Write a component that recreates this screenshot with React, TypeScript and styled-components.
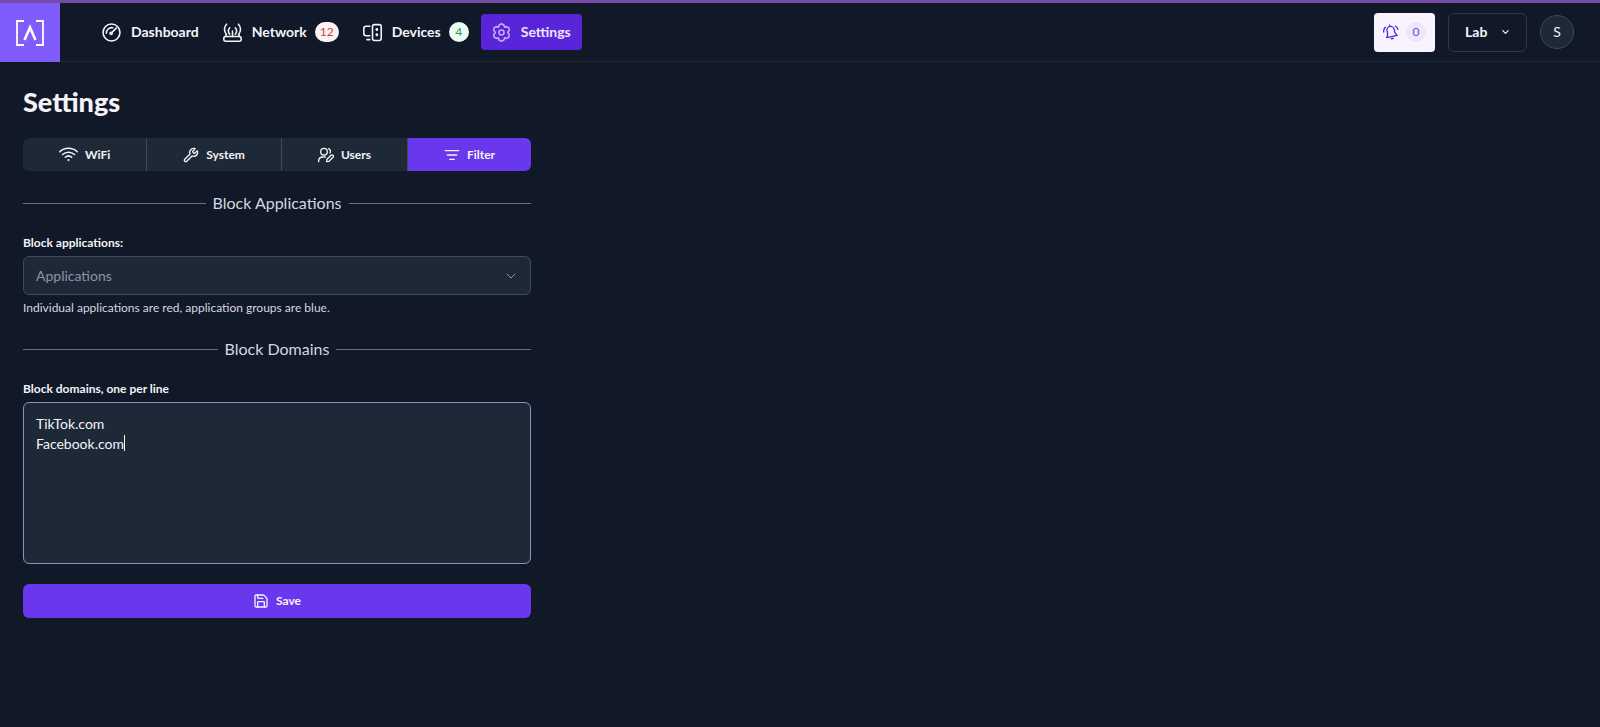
import React, { useState } from 'react';
import styled, { createGlobalStyle, css } from 'styled-components';
import { ChevronDown, Save, Wrench } from 'lucide-react';

const color = {
  page: '#111827',
  surface: '#1e2938',
  line: '#2d3748',
  border: '#3e4b5c',
  rule: '#65718a',
  focus: '#8496bd',
  text: '#f3f4f8',
  soft: '#d3d7e0',
  muted: '#8b95a5',
  accent: '#6a38ec',
  accentDeep: '#5a25d8',
  brand: '#7f5cfb',
};

const GlobalStyle = createGlobalStyle`
  *, *::before, *::after { box-sizing: border-box; }
  body {
    margin: 0;
    background: ${color.page};
    color: ${color.text};
    font-family: Lato, 'Liberation Sans', sans-serif;
    font-size: 14px;
    line-height: 20px;
  }
  button, select, textarea { font: inherit; color: inherit; }
`;

const Header = styled.header`
  display: flex;
  align-items: center;
  height: 62px;
  border-top: 3px solid #754ba6;
  border-bottom: 1px solid #1e2938;
`;

const Brand = styled.a`
  display: flex;
  align-items: center;
  justify-content: center;
  align-self: stretch;
  width: 60px;
  margin-bottom: -1px;
  background: ${color.brand};
  color: #fff;
`;

const Nav = styled.nav`
  display: flex;
  align-items: center;
  margin-left: 30px;
`;

const NavLink = styled.a<{ $active?: boolean }>`
  display: flex;
  align-items: center;
  gap: 10px;
  height: 36px;
  padding: 0 12px;
  border-radius: 4px;
  color: ${color.text};
  font-weight: 700;
  text-decoration: none;
  svg { flex: none; }
  ${(p) => p.$active && css`
    padding: 0 11px;
    background: ${color.accentDeep};
    color: #ede7ff;
    svg { color: #c3adfa; }
  `}
`;

const Count = styled.span<{ $tone: 'red' | 'green' | 'violet' }>`
  display: inline-flex;
  align-items: center;
  justify-content: center;
  min-width: 20px;
  height: 20px;
  margin-left: -2px;
  padding: 0 5px;
  border-radius: 10px;
  font-size: 12px;
  font-weight: 400;
  ${(p) => p.$tone === 'red' && css`background: #fef2f2; color: #c4473f;`}
  ${(p) => p.$tone === 'green' && css`background: #ecfdf5; color: #2c9560;`}
  ${(p) => p.$tone === 'violet' && css`background: #ede6fd; color: #7450b8;`}
`;

const HeaderTools = styled.div`
  display: flex;
  align-items: center;
  gap: 13px;
  margin-left: auto;
  padding-right: 26px;
`;

const AlertButton = styled.button`
  display: flex;
  align-items: center;
  gap: 9px;
  height: 39px;
  padding: 0 9px;
  border: 0;
  border-radius: 4px;
  background: #f8f4ff;
  color: #5a25d8;
`;

const SelectBox = styled.div<{ $inset: number }>`
  position: relative;
  svg {
    position: absolute;
    top: 50%;
    right: ${(p) => p.$inset}px;
    transform: translateY(-50%);
    pointer-events: none;
  }
`;

const SiteSelect = styled.select`
  appearance: none;
  display: block;
  height: 39px;
  padding: 0 38px 0 16px;
  border: 1px solid ${color.line};
  border-radius: 6px;
  background: transparent;
  font-weight: 700;
`;

const Avatar = styled.button`
  width: 34px;
  height: 34px;
  padding: 0;
  border: 1px solid ${color.border};
  border-radius: 50%;
  background: ${color.surface};
`;

const Main = styled.main`
  max-width: 554px;
  padding: 24px 23px;
`;

const Title = styled.h1`
  margin: 0 0 20px;
  font-size: 27px;
  line-height: 32px;
  font-weight: 900;
`;

const Tabs = styled.div`
  display: flex;
  height: 33px;
  border-radius: 6px;
  overflow: hidden;
`;

const Tab = styled.button<{ $active?: boolean }>`
  display: flex;
  flex: 1 1 auto;
  align-items: center;
  justify-content: center;
  gap: 7px;
  padding: 0;
  border: 0;
  border-right: 1px solid ${color.border};
  background: ${(p) => (p.$active ? color.accent : color.surface)};
  font-size: 12px;
  font-weight: 700;
  &:last-child { border-right: 0; }
`;

const Form = styled.form`
  display: flex;
  flex-direction: column;
`;

const SectionTitle = styled.h2`
  display: flex;
  align-items: center;
  gap: 7px;
  margin: 20px 0 18px;
  color: ${color.soft};
  font-size: 16px;
  line-height: 24px;
  font-weight: 400;
  &::before, &::after {
    content: '';
    flex: 1;
    height: 1px;
    background: ${color.rule};
  }
`;

const Label = styled.label`
  margin-bottom: 3px;
  font-size: 12px;
  font-weight: 700;
`;

const AppSelect = styled.select`
  appearance: none;
  display: block;
  width: 100%;
  height: 39px;
  padding: 0 12px;
  border: 1px solid ${color.border};
  border-radius: 6px;
  background: ${color.surface};
  color: ${color.muted};
`;

const Hint = styled.p`
  margin: 4px 0 0;
  color: ${color.soft};
  font-size: 12px;
  line-height: 18px;
`;

const AreaBox = styled.div`
  position: relative;
`;

const Area = styled.textarea`
  display: block;
  width: 100%;
  height: 162px;
  padding: 11px 12px;
  border: 1px solid ${color.focus};
  border-radius: 6px;
  outline: 0;
  resize: none;
  background: ${color.surface};
  caret-color: transparent;
`;

const Caret = styled.span`
  position: absolute;
  top: 33px;
  left: 101px;
  width: 1px;
  height: 16px;
  background: ${color.text};
`;

const SaveButton = styled.button`
  display: flex;
  align-items: center;
  justify-content: center;
  gap: 7px;
  height: 34px;
  margin-top: 20px;
  border: 0;
  border-radius: 6px;
  background: ${color.accent};
  font-size: 12px;
  font-weight: 700;
`;

const Icon = ({ size = 19, stroke = 2, children }: { size?: number; stroke?: number; children: React.ReactNode }) => (
  <svg width={size} height={size} viewBox="0 0 24 24" fill="none" stroke="currentColor"
    strokeWidth={stroke} strokeLinecap="round" strokeLinejoin="round" aria-hidden="true">
    {children}
  </svg>
);

const LogoMark = () => (
  <svg width="30" height="28" viewBox="0 0 30 28" fill="none" stroke="currentColor" aria-hidden="true">
    <path d="M9 2H2v24h7M21 2h7v24h-7" strokeWidth="1.800" />
    <path d="M9.500 21 15 8.500l5.500 12.500" strokeWidth="2.600" />
  </svg>
);

const GaugeIcon = () => (
  <Icon>
    <circle cx="12" cy="12" r="10.700" />
    <path d="M5.500 13a6.800 6.800 0 0 1 8-7" />
    <circle cx="11.500" cy="13" r="1.400" />
    <path d="m12.500 12 5.500-5.500" />
  </Icon>
);

const RouterIcon = () => (
  <Icon>
    <rect x="1" y="17" width="22" height="6" rx="2.500" />
    <path d="M12 17v-7M3.500 17v-2M20.500 17v-2M8.500 14a5.500 5.500 0 0 1 0-8M15.500 14a5.500 5.500 0 0 0 0-8M4.500 14.500C1 11 1 5 4.500 1.500M19.500 14.500C23 11 23 5 19.500 1.500" />
  </Icon>
);

const DevicesIcon = () => (
  <Icon>
    <path d="M8.500 4H4a3 3 0 0 0-3 3v6a3 3 0 0 0 3 3h4.500M5 21h3.500" />
    <rect x="12" y="2" width="11" height="20" rx="2.500" />
    <path d="M17.500 8v.500M17.500 14.500v.500" strokeWidth="3.400" />
  </Icon>
);

const GearIcon = () => (
  <Icon>
    <path d="m12 1 3 1.500.800 2.700 2.700-.600 2.700 1.400.600 3.200-2 2.800 2 2.800-.600 3.200-2.700 1.400-2.700-.600-.800 2.700L12 23l-3-1.500-.800-2.700-2.700.600L2.800 18l-.600-3.200 2-2.800-2-2.800L2.800 6l2.700-1.400 2.700.600L9 2.500Z" />
    <circle cx="12" cy="12" r="3.200" />
  </Icon>
);

const RingingBell = () => (
  <Icon size={16}>
    <g transform="rotate(-12 12 12)">
      <path d="M12 3.500A5.500 5.500 0 0 0 6.500 9v5L4 19h16l-2.500-5V9A5.500 5.500 0 0 0 12 3.500ZM10.500 22h3M12 3.500V1.500" />
    </g>
    <path d="M1 12c-.300-3 .500-5 2.500-7M18.500 3c2 1 3.200 2.800 3.800 5" />
  </Icon>
);

const WifiIcon = () => (
  <Icon size={19} stroke={1.900}>
    <path d="M1 8.500a16 16 0 0 1 22 0M4.500 12a11 11 0 0 1 15 0M8 15.500a6 6 0 0 1 8 0" />
    <path d="M12 19h.01" strokeWidth="2.600" />
  </Icon>
);

const UsersIcon = () => (
  <Icon size={16}>
    <circle cx="9" cy="7" r="5" />
    <path d="M1 22v-2a6 6 0 0 1 6-5h4M16 2.500a5 5 0 0 1 2 6.500M13 22l.500-3.500 6-6a2 2 0 0 1 3 3l-6 6Z" />
  </Icon>
);

const FilterIcon = () => (
  <Icon size={16}>
    <path d="M2 5.500h20M5 12h14M8.500 18.500h7" />
  </Icon>
);

export default function App() {
  const [domains, setDomains] = useState('TikTok.com\nFacebook.com');

  return (
    <>
      <GlobalStyle />
      <Header>
        <Brand href="#" aria-label="Home"><LogoMark /></Brand>
        <Nav aria-label="Main">
          <NavLink href="#dashboard"><GaugeIcon />Dashboard</NavLink>
          <NavLink href="#network"><RouterIcon />Network<Count $tone="red">12</Count></NavLink>
          <NavLink href="#devices"><DevicesIcon />Devices<Count $tone="green">4</Count></NavLink>
          <NavLink href="#settings" $active aria-current="page"><GearIcon />Settings</NavLink>
        </Nav>
        <HeaderTools>
          <AlertButton type="button" aria-label="Alerts">
            <RingingBell /><Count $tone="violet">0</Count>
          </AlertButton>
          <SelectBox $inset={16}>
            <SiteSelect aria-label="Site"><option>Lab</option></SiteSelect>
            <ChevronDown size={11} strokeWidth={2.5} />
          </SelectBox>
          <Avatar type="button" aria-label="Account">S</Avatar>
        </HeaderTools>
      </Header>
      <Main>
        <Title>Settings</Title>
        <Tabs role="tablist">
          <Tab type="button" role="tab" aria-selected={false}><WifiIcon />WiFi</Tab>
          <Tab type="button" role="tab" aria-selected={false}><Wrench size={16} />System</Tab>
          <Tab type="button" role="tab" aria-selected={false}><UsersIcon />Users</Tab>
          <Tab type="button" role="tab" aria-selected $active><FilterIcon />Filter</Tab>
        </Tabs>
        <Form onSubmit={(e) => e.preventDefault()}>
          <SectionTitle>Block Applications</SectionTitle>
          <Label htmlFor="applications">Block applications:</Label>
          <SelectBox $inset={12}>
            <AppSelect id="applications"><option>Applications</option></AppSelect>
            <ChevronDown size={16} strokeWidth={1.5} color={color.muted} />
          </SelectBox>
          <Hint>Individual applications are red, application groups are blue.</Hint>
          <SectionTitle>Block Domains</SectionTitle>
          <Label htmlFor="domains">Block domains, one per line</Label>
          <AreaBox>
            <Area id="domains" value={domains} spellCheck={false} onChange={(e) => setDomains(e.target.value)} />
            <Caret />
          </AreaBox>
          <SaveButton type="submit"><Save size={16} />Save</SaveButton>
        </Form>
      </Main>
    </>
  );
}
